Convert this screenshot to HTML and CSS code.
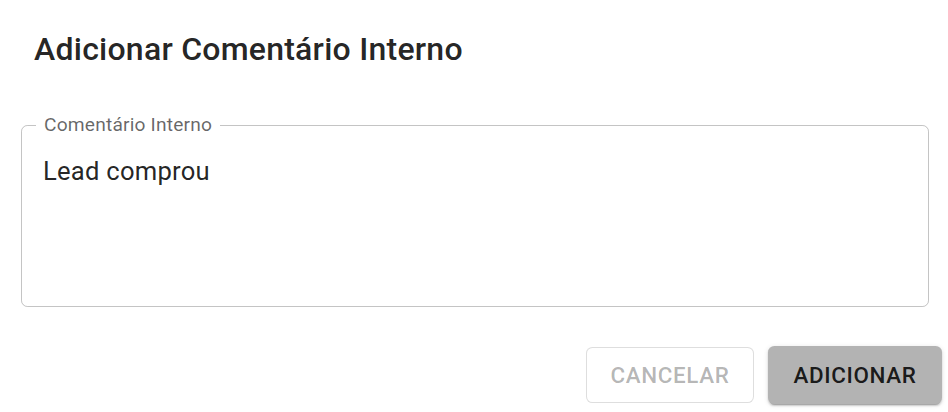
FILE: index.html
```html
<!DOCTYPE html>
<html lang="pt">
<head>
<meta charset="utf-8">
<link rel="stylesheet" href="styles.css">
</head>
<body>
<div class="dialog">
  <h2 class="title">Adicionar Comentário Interno</h2>
  <div class="content">
    <fieldset class="field">
      <legend class="legend">Comentário Interno</legend>
      <div class="value">Lead comprou</div>
    </fieldset>
  </div>
  <div class="actions">
    <button class="btn btn-outlined" disabled>Cancelar</button>
    <button class="btn btn-contained">Adicionar</button>
  </div>
</div>
</body>
</html>
```
FILE: styles.css
```css
html, body {
  margin: 0;
  padding: 0;
  background: #fff;
}
body {
  font-family: Roboto, "Liberation Sans", sans-serif;
  width: 948px;
  height: 412px;
  overflow: hidden;
}
.dialog {
  display: flex;
  flex-direction: column;
}
.title {
  margin: 0;
  padding: 29px 32px 0 34px;
  font-size: 32px;
  font-weight: 500;
  line-height: 40px;
  color: rgba(0,0,0,0.87);
  letter-spacing: 0.24px;
}
.content {
  padding: 46px 19px 0 21px;
}
.field {
  margin: 0;
  height: 190px;
  border: 1.3px solid rgba(0,0,0,0.23);
  border-radius: 6.4px;
  padding: 0 21px;
  min-width: 0;
}
.legend {
  padding: 0 8px;
  margin-left: -7px;
  font-size: 19.2px;
  line-height: 20px;
  color: rgba(0,0,0,0.6);
  letter-spacing: 0.18px;
}
.value {
  margin-top: 18px;
  font-size: 25.6px;
  line-height: 36px;
  color: rgba(0,0,0,0.87);
  letter-spacing: 0.24px;
}
.actions {
  display: flex;
  justify-content: flex-end;
  gap: 14px;
  padding: 39px 6px 0 0;
}
.btn {
  font-family: Roboto, "Liberation Sans", sans-serif;
  text-transform: uppercase;
  font-size: 22.4px;
  font-weight: 500;
  letter-spacing: 0.64px;
  border-radius: 6.4px;
  padding: 0;
  box-sizing: border-box;
}
.btn-outlined {
  background: #fff;
  border: 1.3px solid rgba(0,0,0,0.13);
  color: rgba(0,0,0,0.3);
  width: 168px;
  margin-top: 1px;
  height: 56px;
}
.btn-contained {
  background: #b3b3b3;
  border: none;
  color: rgba(0,0,0,0.87);
  width: 174px;
  height: 58px;
  box-shadow: 0 3px 1px -2px rgba(0,0,0,0.2), 0 2px 2px 0 rgba(0,0,0,0.14), 0 1px 5px 0 rgba(0,0,0,0.12);
}
```
